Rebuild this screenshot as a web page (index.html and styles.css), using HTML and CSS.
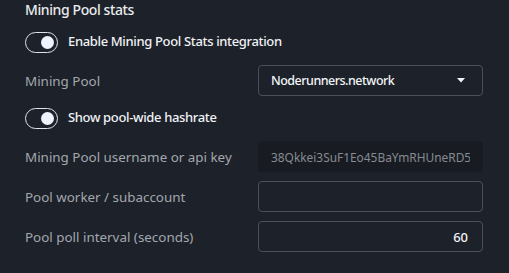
FILE: index.html
```html
<!DOCTYPE html>
<html lang="en">
<head>
    <meta charset="UTF-8">
    <meta name="viewport" content="width=device-width, initial-scale=1.0">
    <title>Mining Pool stats</title>
    <link rel="stylesheet" href="styles.css">
</head>
<body>
    <div class="settings">
        <div class="heading">Mining Pool stats</div>

        <div class="toggle-row">
            <span class="switch"><span class="knob"></span></span>
            <span class="toggle-label">Enable Mining Pool Stats integration</span>
        </div>

        <div class="field">
            <div class="label">Mining Pool</div>
            <div class="control select">
                <span>Noderunners.network</span>
                <svg class="caret" width="8" height="5" viewBox="0 0 8 5"><path d="M0 0h8L4 4.5z" fill="#f2f4f7"/></svg>
            </div>
        </div>

        <div class="toggle-row">
            <span class="switch"><span class="knob"></span></span>
            <span class="toggle-label">Show pool-wide hashrate</span>
        </div>

        <div class="field">
            <div class="label">Mining Pool username or api key</div>
            <div class="control disabled"><div class="value">38Qkkei3SuF1Eo45BaYmRHUneRD54JmyC8Qz</div></div>
        </div>

        <div class="field">
            <div class="label">Pool worker / subaccount</div>
            <div class="control"></div>
        </div>

        <div class="field">
            <div class="label">Pool poll interval (seconds)</div>
            <div class="control number"><span>60</span></div>
        </div>
    </div>
</body>
</html>
```

FILE: styles.css
```css
body {
    margin: 0;
    background-color: #1d2129;
    font-family: "Noto Sans", "Open Sans", sans-serif;
    color: #eceef1;
    height: 273px;
    overflow: hidden;
}
.settings {
    padding-left: 25px;
    width: 458px;
}
.heading {
    height: 20px;
    line-height: 19px;
    font-size: 14px;
    font-weight: 500;
    letter-spacing: -0.4px;
    color: #e9ebee;
}
.toggle-row {
    display: flex;
    align-items: center;
    height: 22px;
    margin: 11px 0 12px;
}
.switch {
    box-sizing: border-box;
    width: 33px;
    height: 21px;
    border: 1.5px solid #dfe3e9;
    border-radius: 11px;
    display: flex;
    align-items: center;
    justify-content: flex-end;
    padding-right: 3px;
}
.knob {
    width: 13px;
    height: 13px;
    border-radius: 50%;
    background: #eef3ff;
}
.toggle-label {
    margin-left: 10px;
    margin-top: -3px;
    font-size: 13px;
    font-weight: 500;
    letter-spacing: -0.35px;
    color: #f0f2f5;
}
.field {
    display: flex;
    align-items: center;
    height: 31px;
    margin-bottom: 9px;
}
.label {
    width: 233px;
    font-size: 13.4px;
    color: #a3a7ae;
}
.control {
    box-sizing: border-box;
    width: 225px;
    height: 31px;
    border: 1px solid #4a4f58;
    border-radius: 4px;
    display: flex;
    align-items: center;
    padding: 0 12px;
    font-size: 13px;
    white-space: nowrap;
    overflow: hidden;
}
.select {
    justify-content: space-between;
    font-size: 12.5px;
    font-weight: 500;
    letter-spacing: -0.5px;
    color: #f2f4f7;
    padding-right: 17px;
}
.caret {
    display: block;
}
.disabled {
    border-color: #181c22;
    background: #181c22;
    color: #868b93;
    font-size: 11.9px;
}
.value {
    width: 200px;
    overflow: hidden;
}
.number {
    justify-content: flex-end;
    font-weight: 500;
    color: #f2f4f7;
    padding-right: 14px;
}
```
